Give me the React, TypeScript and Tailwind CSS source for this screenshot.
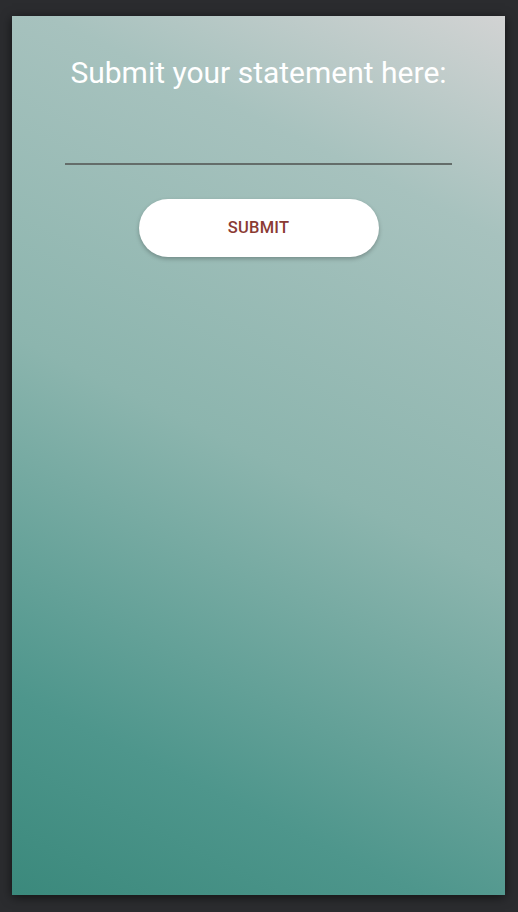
import { useState } from "react";

export default function App() {
  const [statement, setStatement] = useState("");

  return (
    <div className="w-full h-[912px] bg-[#2b2c2f] pt-4 pl-3 pr-[13px] pb-[17px] font-['Roboto',sans-serif]">
      {/* main card */}
      <div className="h-full w-full flex flex-col items-center shadow-[0_2px_10px_rgba(0,0,0,0.6)] bg-[linear-gradient(26deg,#3b897c_0%,#4e968c_18%,#8cb5ae_50%,#a7c2be_80%,#d2d3d3_100%)]">
        <h1 className="mt-[39px] text-[30px] leading-[36px] text-white font-normal">
          Submit your statement here:
        </h1>
        <input
          type="text"
          value={statement}
          onChange={(e) => setStatement(e.target.value)}
          className="mt-[40px] w-[387px] h-[34px] bg-transparent border-b-2 border-[#646d6a] outline-none text-white text-base"
        />
        <button
          className="mt-[34px] w-[240px] h-[58px] rounded-full bg-white text-[#8b3a33] text-[16.5px] font-medium tracking-[0.2px] shadow-[0_2px_4px_rgba(0,0,0,0.25)]"
          onClick={() => setStatement("")}
        >
          SUBMIT
        </button>
      </div>
    </div>
  );
}
